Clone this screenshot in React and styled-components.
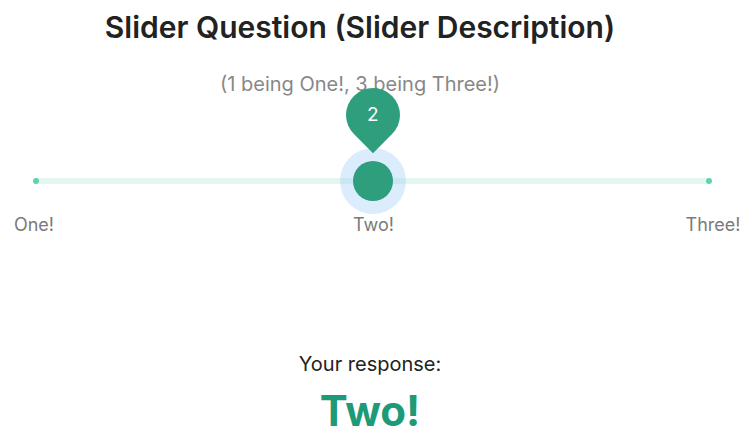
import React from 'react'
import styled, { createGlobalStyle } from 'styled-components'

const GlobalStyle = createGlobalStyle`
  body {
    margin: 0;
    background: #ffffff;
    font-family: Inter, "Noto Sans", sans-serif;
  }
`;

const Page = styled.div`
  width: 756px;
  height: 444px;
  overflow: hidden;
  display: flex;
  flex-direction: column;
`;

const Header = styled.div`
  padding: 9px 36px 0 0;
  text-align: center;
`;

const Title = styled.h1`
  margin: 0;
  font-size: 30px;
  line-height: 36px;
  font-weight: 600;
  color: #222222;
`;

const Subtitle = styled.p`
  margin: 27px 0 0;
  font-size: 20px;
  line-height: 24px;
  color: #888888;
`;

const SliderArea = styled.div`
  padding: 82px 47px 0 36px;
`;

const Rail = styled.div`
  position: relative;
  height: 6px;
  border-radius: 3px;
  background: #e3f7f0;
`;

const Mark = styled.span`
  position: absolute;
  top: 0;
  width: 6px;
  height: 6px;
  margin-left: -3px;
  border-radius: 50%;
  background: #5cd6a6;
`;

const Thumb = styled.div`
  position: absolute;
  top: 3px;
  width: 40px;
  height: 40px;
  margin: -20px 0 0 -20px;
  border-radius: 50%;
  background: #2e9e7c;
  box-shadow: 0 0 0 13px rgba(160, 206, 246, 0.38);
`;

const Pin = styled.div`
  position: absolute;
  left: -7px;
  top: -73px;
  width: 54px;
  height: 54px;
  border-radius: 50% 50% 0 50%;
  background: #2e9e7c;
  transform: rotate(45deg);
  display: flex;
  align-items: center;
  justify-content: center;
`;

const PinText = styled.span`
  transform: rotate(-45deg);
  color: #ffffff;
  font-size: 19px;
  line-height: 22px;
`;

const Labels = styled.div`
  display: flex;
  justify-content: space-between;
  margin: 30px -4px 0 -2px;
`;

const Label = styled.span`
  width: 0;
  display: flex;
  justify-content: center;
  white-space: nowrap;
  font-size: 18px;
  line-height: 22px;
  color: #7a7a7a;
`;

const Response = styled.div`
  margin-top: 116px;
  padding-right: 16px;
  text-align: center;
`;

const ResponseLabel = styled.div`
  font-size: 20px;
  line-height: 24px;
  color: #222222;
`;

const ResponseValue = styled.div`
  margin-top: 10px;
  font-size: 42px;
  line-height: 50px;
  font-weight: 700;
  color: #1f9a78;
`;

const marks = [
  { value: 1, label: 'One!' },
  { value: 2, label: 'Two!' },
  { value: 3, label: 'Three!' },
];

export default function App() {
  const min = 1;
  const max = 3;
  const value = 2;
  const pos = v => `${((v - min) / (max - min)) * 100}%`;
  const current = marks.find(m => m.value === value);

  return (
    <Page>
      <GlobalStyle />
      <Header>
        <Title>Slider Question (Slider Description)</Title>
        <Subtitle>(1 being One!, 3 being Three!)</Subtitle>
      </Header>

      <SliderArea>
        <Rail>
          {marks.map(m => (
            <Mark key={m.value} style={{ left: pos(m.value) }} />
          ))}
          <Thumb style={{ left: pos(value) }}>
            <Pin>
              <PinText>{value}</PinText>
            </Pin>
          </Thumb>
        </Rail>
        <Labels>
          {marks.map(m => (
            <Label key={m.value}>{m.label}</Label>
          ))}
        </Labels>
      </SliderArea>

      <Response>
        <ResponseLabel>Your response:</ResponseLabel>
        <ResponseValue>{current.label}</ResponseValue>
      </Response>
    </Page>
  );
}
